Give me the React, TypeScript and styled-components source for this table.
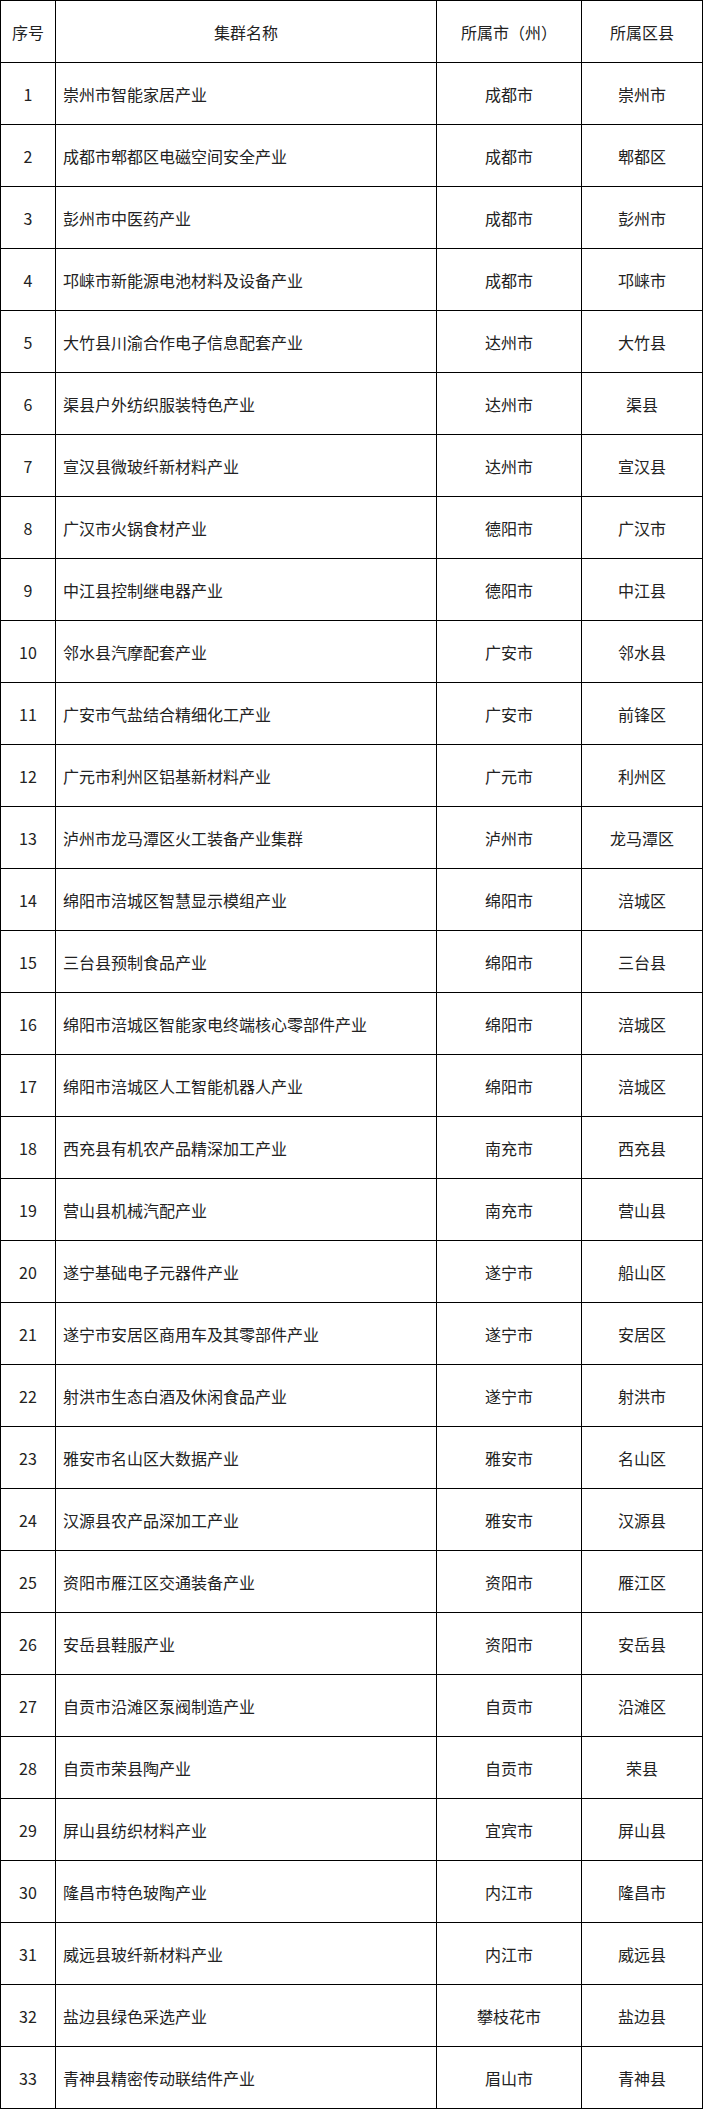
import styled, { createGlobalStyle } from 'styled-components';

type Cluster = [string, string, string];

const clusters: Cluster[] = [
  ['崇州市智能家居产业', '成都市', '崇州市'],
  ['成都市郫都区电磁空间安全产业', '成都市', '郫都区'],
  ['彭州市中医药产业', '成都市', '彭州市'],
  ['邛崃市新能源电池材料及设备产业', '成都市', '邛崃市'],
  ['大竹县川渝合作电子信息配套产业', '达州市', '大竹县'],
  ['渠县户外纺织服装特色产业', '达州市', '渠县'],
  ['宣汉县微玻纤新材料产业', '达州市', '宣汉县'],
  ['广汉市火锅食材产业', '德阳市', '广汉市'],
  ['中江县控制继电器产业', '德阳市', '中江县'],
  ['邻水县汽摩配套产业', '广安市', '邻水县'],
  ['广安市气盐结合精细化工产业', '广安市', '前锋区'],
  ['广元市利州区铝基新材料产业', '广元市', '利州区'],
  ['泸州市龙马潭区火工装备产业集群', '泸州市', '龙马潭区'],
  ['绵阳市涪城区智慧显示模组产业', '绵阳市', '涪城区'],
  ['三台县预制食品产业', '绵阳市', '三台县'],
  ['绵阳市涪城区智能家电终端核心零部件产业', '绵阳市', '涪城区'],
  ['绵阳市涪城区人工智能机器人产业', '绵阳市', '涪城区'],
  ['西充县有机农产品精深加工产业', '南充市', '西充县'],
  ['营山县机械汽配产业', '南充市', '营山县'],
  ['遂宁基础电子元器件产业', '遂宁市', '船山区'],
  ['遂宁市安居区商用车及其零部件产业', '遂宁市', '安居区'],
  ['射洪市生态白酒及休闲食品产业', '遂宁市', '射洪市'],
  ['雅安市名山区大数据产业', '雅安市', '名山区'],
  ['汉源县农产品深加工产业', '雅安市', '汉源县'],
  ['资阳市雁江区交通装备产业', '资阳市', '雁江区'],
  ['安岳县鞋服产业', '资阳市', '安岳县'],
  ['自贡市沿滩区泵阀制造产业', '自贡市', '沿滩区'],
  ['自贡市荣县陶产业', '自贡市', '荣县'],
  ['屏山县纺织材料产业', '宜宾市', '屏山县'],
  ['隆昌市特色玻陶产业', '内江市', '隆昌市'],
  ['威远县玻纤新材料产业', '内江市', '威远县'],
  ['盐边县绿色采选产业', '攀枝花市', '盐边县'],
  ['青神县精密传动联结件产业', '眉山市', '青神县'],
];

const GlobalStyle = createGlobalStyle`
  html, body {
    margin: 0;
    padding: 0;
    background: #fff;
  }

  body {
    font-family: 'Noto Sans CJK SC', 'Noto Sans', sans-serif;
    color: #222;
  }
`;

const Table = styled.div`
  display: grid;
  grid-template-columns: 55px 381px 145px 121px;
  grid-auto-rows: 62px;
  width: max-content;
  border-top: 1px solid #000;
  border-left: 1px solid #000;
`;

const Cell = styled.div<{ $align?: 'left' | 'center' }>`
  display: flex;
  align-items: center;
  justify-content: ${(props) => (props.$align === 'left' ? 'flex-start' : 'center')};
  padding: 0 ${(props) => (props.$align === 'left' ? '7px' : '0')};
  border-right: 1px solid #000;
  border-bottom: 1px solid #000;
  font-size: 16px;
  line-height: 1;
  white-space: nowrap;
`;

const App = () => {
  return (
    <>
      <GlobalStyle />
      <Table>
        <Cell>序号</Cell>
        <Cell>集群名称</Cell>
        <Cell>所属市（州）</Cell>
        <Cell>所属区县</Cell>
        {clusters.map(([name, city, district], index) => (
          <Row key={name} index={index + 1} name={name} city={city} district={district} />
        ))}
      </Table>
    </>
  );
};

const Row = ({
  index,
  name,
  city,
  district,
}: {
  index: number;
  name: string;
  city: string;
  district: string;
}) => (
  <>
    <Cell>{index}</Cell>
    <Cell $align="left">{name}</Cell>
    <Cell>{city}</Cell>
    <Cell>{district}</Cell>
  </>
);

export default App;
